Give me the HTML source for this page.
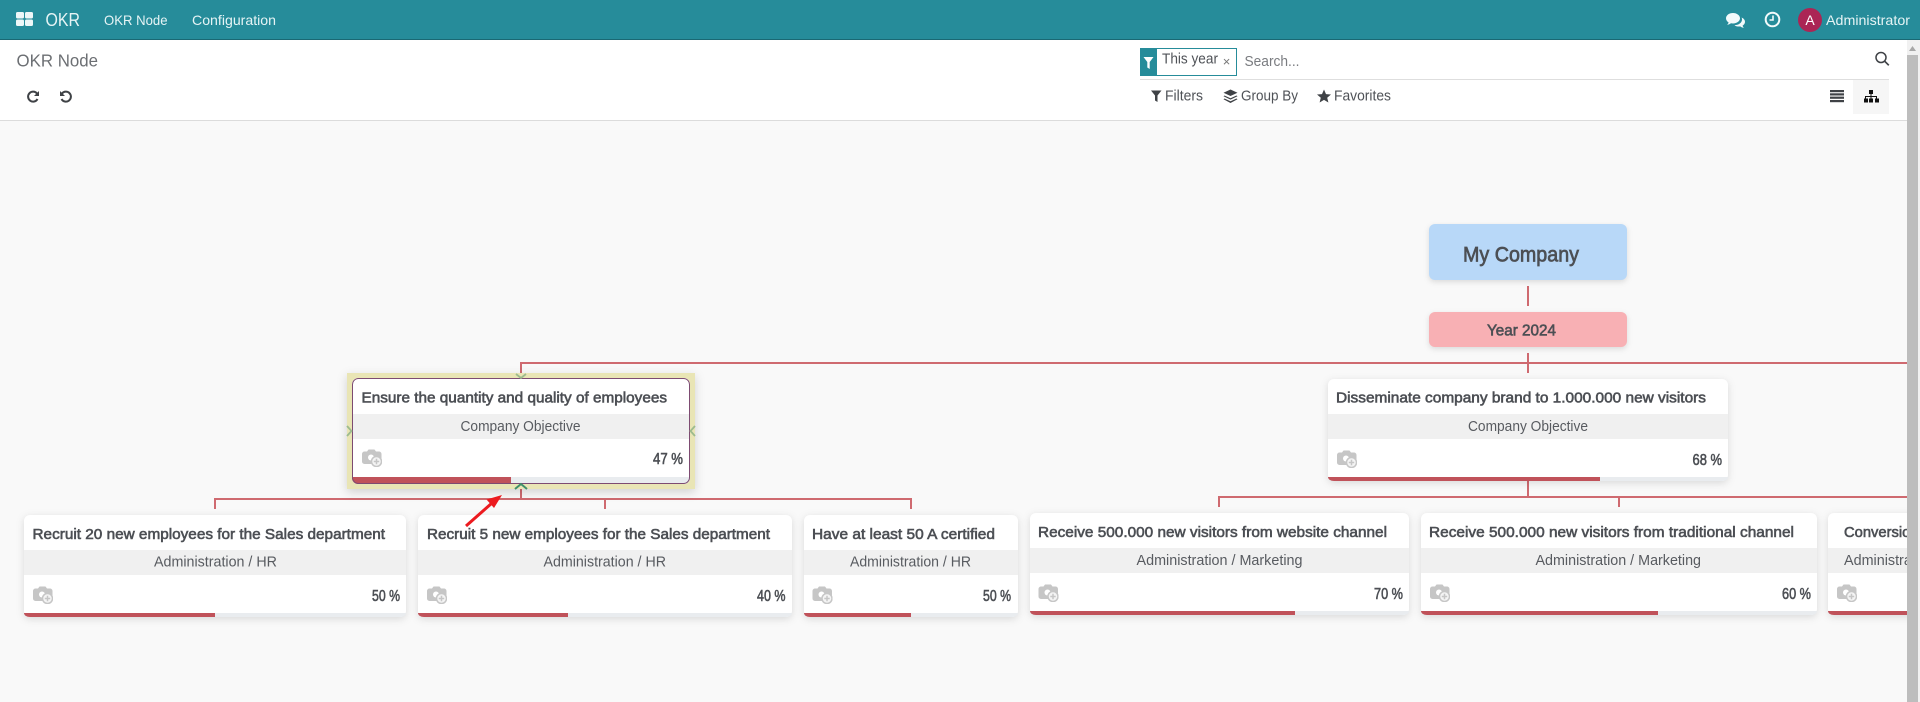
<!DOCTYPE html>
<html lang="en">
<head>
<meta charset="utf-8">
<title>OKR Node</title>
<style>
html,body{margin:0;padding:0;width:1920px;height:702px;overflow:hidden;background:#f9f9f9}
svg{display:block}
text{font-family:"Liberation Sans",Arial,sans-serif}
.t{font-size:15px;fill:#4c4f54;stroke:#4c4f54;stroke-width:.6px}
.s{font-size:14.500px;fill:#585b60}
.p{font-size:15.500px;fill:#4c4f54;stroke:#4c4f54;stroke-width:.6px}
.n{font-size:14px;fill:#e6f4f5}
.b{font-size:14.500px;fill:#4f5257}
.c{fill:#fff;filter:drop-shadow(0 2px 4px rgba(0,0,0,.13))}
</style>
</head>
<body>
<svg xmlns="http://www.w3.org/2000/svg" width="1920" height="702" viewBox="0 0 1920 702">
<defs>
<symbol id="cam" viewBox="0 0 20 18" width="20" height="18">
<path fill="#c6c6c6" d="M2.500 2.500H5L6.500 .5h6L14 2.500h3a2.500 2.500 0 0 1 2.500 2.500v7.500a2.500 2.500 0 0 1-2.500 2.500H2.500a2.500 2.500 0 0 1-2.500-2.500V5a2.500 2.500 0 0 1 2.500-2.500z"/>
<circle cx="9" cy="8.500" r="3" fill="#fff"/>
<circle cx="14.500" cy="12.500" r="5" fill="#f4f4f4" stroke="#c6c6c6" stroke-width="1.500"/>
<path d="M14.500 9.800v5.400M11.800 12.500h5.400" stroke="#c6c6c6" stroke-width="1.500"/>
</symbol>
<clipPath id="cr"><rect x="1828" y="500" width="79" height="130"/></clipPath>
</defs>

<rect width="1920" height="702" fill="#f9f9f9"/>

<!-- navbar -->
<rect width="1920" height="39" fill="#268c9a"/>
<rect y="39" width="1920" height="1" fill="#1a6873"/>
<g fill="#eef7f8">
<rect x="16" y="12" width="8" height="6.500" rx="1.500"/><rect x="25" y="12" width="8" height="6.500" rx="1.500"/>
<rect x="16" y="19.500" width="8" height="6.500" rx="1.500"/><rect x="25" y="19.500" width="8" height="6.500" rx="1.500"/>
</g>
<text x="45.500" y="26" font-size="18" fill="#e6f4f5" textLength="34.500" lengthAdjust="spacingAndGlyphs">OKR</text>
<text class="n" x="104" y="25" textLength="63.500" lengthAdjust="spacingAndGlyphs">OKR Node</text>
<text class="n" x="192" y="25" textLength="84" lengthAdjust="spacingAndGlyphs">Configuration</text>
<!-- chat -->
<path fill="#f2fafb" d="M1733 13c-4 0-7 2.400-7 5.300 0 1.700 1 3.200 2.600 4.200-.3 1-.9 1.800-1.500 2.400 1.500-.2 2.900-.8 3.900-1.600.6.100 1.300.2 2 .2 4 0 7-2.400 7-5.200s-3-5.300-7-5.300z"/>
<path fill="#f2fafb" d="M1741.500 17.500c.4.700.5 1.400.5 2 0 3.300-3.300 5.600-7.500 5.700 1.100.9 2.600 1.300 4.200 1.300.5 0 1 0 1.500-.1.900.7 2.300 1.300 3.800 1.500-.6-.6-1.200-1.300-1.400-2.300 1.400-.8 2.400-2.200 2.400-3.700 0-1.900-1.300-3.500-3.500-4.400z"/>
<!-- clock -->
<circle cx="1772.500" cy="19.500" r="6.800" fill="none" stroke="#f2fafb" stroke-width="2"/>
<path d="M1773 15.500v4.500h-3.500" fill="none" stroke="#f2fafb" stroke-width="1.600"/>
<!-- avatar -->
<circle cx="1810" cy="20" r="12" fill="#ab2555"/>
<text x="1810" y="25" font-size="14" fill="#fff" text-anchor="middle">A</text>
<text class="n" x="1826" y="25" textLength="84" lengthAdjust="spacingAndGlyphs">Administrator</text>

<!-- control panel -->
<rect y="40" width="1907" height="80" fill="#fff"/>
<rect y="120" width="1907" height="1" fill="#dcdcdc"/>
<text x="16.500" y="66.500" font-size="17.500" fill="#6c6f73" textLength="81.500" lengthAdjust="spacingAndGlyphs">OKR Node</text>
<g fill="none" stroke="#3f4246" stroke-width="2">
<path d="M37 93.500A5 5 0 1 0 37.500 99"/>
<path d="M62 93.500A5 5 0 1 1 61.500 99"/>
</g>
<path d="M39 91v5h-5z" fill="#3f4246"/>
<path d="M60 91v5h5z" fill="#3f4246"/>

<!-- search -->
<rect x="1140.500" y="48.500" width="96" height="27" fill="#fff" stroke="#268c9a"/>
<rect x="1140" y="48" width="17" height="28" fill="#268c9a"/>
<path d="M1143.500 57h10l-3.800 5v7l-2.400-1.500V62z" fill="#fff"/>
<text class="b" x="1162" y="63.500" textLength="56" lengthAdjust="spacingAndGlyphs">This year</text>
<text x="1226.500" y="66" font-size="13" fill="#777" text-anchor="middle">×</text>
<text x="1244.500" y="66" font-size="14.500" fill="#7a7c80" textLength="55" lengthAdjust="spacingAndGlyphs">Search...</text>
<circle cx="1881" cy="57.500" r="5" fill="none" stroke="#3f4246" stroke-width="1.500"/>
<path d="M1884.800 61.300l4 4" stroke="#3f4246" stroke-width="1.700"/>
<rect x="1140" y="79" width="749" height="1" fill="#dedede"/>

<path d="M1151 90.500h10.500l-4 5v6.500l-2.500-1.500v-5z" fill="#3f4246"/>
<text class="b" x="1165" y="100.500" textLength="38" lengthAdjust="spacingAndGlyphs">Filters</text>
<g fill="#3f4246">
<path d="M1230.500 89.500l7 3.200-7 3.300-7-3.300z"/>
<path d="M1224.500 95.500l6 2.800 6-2.800 1 .8-7 3.300-7-3.300z"/>
<path d="M1224.500 98.500l6 2.800 6-2.800 1 .8-7 3.700-7-3.700z"/>
</g>
<text class="b" x="1241" y="100.500" textLength="57" lengthAdjust="spacingAndGlyphs">Group By</text>
<path d="M1324 89.500l2 4.600 5 .4-3.800 3.200 1.200 4.800-4.400-2.600-4.400 2.600 1.200-4.800-3.800-3.200 5-.4z" fill="#3f4246"/>
<text class="b" x="1334" y="100.500" textLength="57" lengthAdjust="spacingAndGlyphs">Favorites</text>

<g fill="#3f4246">
<rect x="1830" y="90" width="14" height="2.200"/><rect x="1830" y="93.300" width="14" height="2.200"/>
<rect x="1830" y="96.600" width="14" height="2.200"/><rect x="1830" y="100" width="14" height="2.200"/>
</g>
<rect x="1853" y="80" width="36" height="34" fill="#f6f6f6"/>
<g fill="#111">
<rect x="1869" y="90" width="4" height="4"/>
<rect x="1864" y="98.500" width="4" height="4"/><rect x="1869" y="98.500" width="4" height="4"/><rect x="1875" y="98.500" width="4" height="4"/>
<path d="M1870.500 94h1v2h5.500v2.500h-1V97h-4.500v1.500h-1V97H1866v1.500h-1V96h5.500z"/>
</g>

<!-- connectors -->
<g fill="#cf6a70">
<rect x="1527" y="286" width="2" height="20"/>
<rect x="1527" y="353" width="2" height="20"/>
<rect x="520" y="362" width="1387" height="2"/>
<rect x="520" y="362" width="2" height="12"/>
<rect x="520" y="484" width="2" height="15"/>
<rect x="214" y="498" width="698" height="2"/>
<rect x="214" y="498" width="2" height="11"/>
<rect x="604" y="498" width="2" height="11"/>
<rect x="910" y="498" width="2" height="11"/>
<rect x="1527" y="481" width="2" height="16"/>
<rect x="1218" y="496" width="689" height="2"/>
<rect x="1218" y="496" width="2" height="11"/>
<rect x="1618" y="496" width="2" height="11"/>
</g>

<!-- top nodes -->
<rect x="1429" y="224" width="198" height="56" rx="6" fill="#b8d8f8" style="filter:drop-shadow(0 2px 3px rgba(0,0,0,.12))"/>
<text x="1463" y="261.500" font-size="21.500" fill="#4c4f54" stroke="#4c4f54" stroke-width=".7" textLength="116" lengthAdjust="spacingAndGlyphs">My Company</text>
<rect x="1429" y="312" width="198" height="35" rx="6" fill="#f8b0b4" style="filter:drop-shadow(0 2px 3px rgba(0,0,0,.12))"/>
<text x="1487" y="335.500" font-size="15.500" fill="#4c4f54" stroke="#4c4f54" stroke-width=".6" textLength="69" lengthAdjust="spacingAndGlyphs">Year 2024</text>

<!-- selected objective -->
<rect x="347" y="373" width="348" height="116" fill="#e9e5b5" style="filter:drop-shadow(0 3px 5px rgba(0,0,0,.16))"/>
<rect x="352" y="378" width="338" height="106" rx="6" fill="#fff"/>
<rect x="353" y="414" width="336" height="25" fill="#f0f0f0"/>
<path d="M352 477h338v1a6 6 0 0 1-6 6H358a6 6 0 0 1-6-6z" fill="#e9ecef"/>
<path d="M352 477h159v7H358a6 6 0 0 1-6-6z" fill="#c0525a"/>
<rect x="352.500" y="378.500" width="337" height="105" rx="6" fill="none" stroke="#7d4b72"/>
<text class="t" x="361.500" y="402.500" textLength="305.500" lengthAdjust="spacingAndGlyphs">Ensure the quantity and quality of employees</text>
<text class="s" x="460.500" y="431" textLength="120" lengthAdjust="spacingAndGlyphs">Company Objective</text>
<use href="#cam" x="362" y="449"/>
<text class="p" x="653" y="464" textLength="30" lengthAdjust="spacingAndGlyphs">47 %</text>
<g fill="none" stroke-width="1.800">
<path d="M516 374l5 4 5-4" stroke="#9dbb8d"/>
<path d="M347 426l4.500 5-4.500 5" stroke="#9dbb8d"/>
<path d="M695 426l-4.500 5 4.500 5" stroke="#9dbb8d"/>
<path d="M515 489l6-5 6 5" stroke="#3f8f6a" stroke-width="2"/>
</g>

<!-- objective 2 -->
<rect class="c" x="1328" y="379" width="400" height="102" rx="6"/>
<rect x="1328" y="414" width="400" height="25" fill="#f0f0f0"/>
<path d="M1328 477h400a6 4 0 0 1-6 4H1334a6 4 0 0 1-6-4z" fill="#e9ecef"/>
<path d="M1328 477h272v4H1334a6 4 0 0 1-6-4z" fill="#c0525a"/>
<text class="t" x="1336" y="402.500" textLength="370" lengthAdjust="spacingAndGlyphs">Disseminate company brand to 1.000.000 new visitors</text>
<text class="s" x="1468" y="431" textLength="120" lengthAdjust="spacingAndGlyphs">Company Objective</text>
<use href="#cam" x="1337" y="450"/>
<text class="p" x="1692.500" y="465" textLength="29.500" lengthAdjust="spacingAndGlyphs">68 %</text>

<!-- row left -->
<rect class="c" x="24" y="515" width="382" height="102" rx="6"/>
<rect x="24" y="550" width="382" height="25" fill="#f0f0f0"/>
<path d="M24 613h382a6 4 0 0 1-6 4H30a6 4 0 0 1-6-4z" fill="#e9ecef"/>
<path d="M24 613h191v4H30a6 4 0 0 1-6-4z" fill="#c0525a"/>
<text class="t" x="32.500" y="539" textLength="352.500" lengthAdjust="spacingAndGlyphs">Recruit 20 new employees for the Sales department</text>
<text class="s" x="154" y="566.500" textLength="123" lengthAdjust="spacingAndGlyphs">Administration / HR</text>
<use href="#cam" x="33" y="586"/>
<text class="p" x="372" y="601" textLength="28" lengthAdjust="spacingAndGlyphs">50 %</text>

<rect class="c" x="418" y="515" width="374" height="102" rx="6"/>
<rect x="418" y="550" width="374" height="25" fill="#f0f0f0"/>
<path d="M418 613h374a6 4 0 0 1-6 4H424a6 4 0 0 1-6-4z" fill="#e9ecef"/>
<path d="M418 613h150v4H424a6 4 0 0 1-6-4z" fill="#c0525a"/>
<text class="t" x="427" y="539" textLength="343" lengthAdjust="spacingAndGlyphs">Recruit 5 new employees for the Sales department</text>
<text class="s" x="543.500" y="566.500" textLength="122.500" lengthAdjust="spacingAndGlyphs">Administration / HR</text>
<use href="#cam" x="427" y="586"/>
<text class="p" x="757" y="601" textLength="28.500" lengthAdjust="spacingAndGlyphs">40 %</text>

<rect class="c" x="804" y="515" width="214" height="102" rx="6"/>
<rect x="804" y="550" width="214" height="25" fill="#f0f0f0"/>
<path d="M804 613h214a6 4 0 0 1-6 4H810a6 4 0 0 1-6-4z" fill="#e9ecef"/>
<path d="M804 613h107v4H810a6 4 0 0 1-6-4z" fill="#c0525a"/>
<text class="t" x="812" y="539" textLength="183" lengthAdjust="spacingAndGlyphs">Have at least 50 A certified</text>
<text class="s" x="850" y="566.500" textLength="121" lengthAdjust="spacingAndGlyphs">Administration / HR</text>
<use href="#cam" x="812.500" y="586"/>
<text class="p" x="983" y="601" textLength="28" lengthAdjust="spacingAndGlyphs">50 %</text>

<!-- row right -->
<rect class="c" x="1030" y="513" width="379" height="102" rx="6"/>
<rect x="1030" y="548" width="379" height="25" fill="#f0f0f0"/>
<path d="M1030 611h379a6 4 0 0 1-6 4H1036a6 4 0 0 1-6-4z" fill="#e9ecef"/>
<path d="M1030 611h265v4H1036a6 4 0 0 1-6-4z" fill="#c0525a"/>
<text class="t" x="1038" y="537" textLength="349" lengthAdjust="spacingAndGlyphs">Receive 500.000 new visitors from website channel</text>
<text class="s" x="1136.500" y="565" textLength="166" lengthAdjust="spacingAndGlyphs">Administration / Marketing</text>
<use href="#cam" x="1038.500" y="584"/>
<text class="p" x="1374" y="599" textLength="29" lengthAdjust="spacingAndGlyphs">70 %</text>

<rect class="c" x="1421" y="513" width="396" height="102" rx="6"/>
<rect x="1421" y="548" width="396" height="25" fill="#f0f0f0"/>
<path d="M1421 611h396a6 4 0 0 1-6 4H1427a6 4 0 0 1-6-4z" fill="#e9ecef"/>
<path d="M1421 611h237v4H1427a6 4 0 0 1-6-4z" fill="#c0525a"/>
<text class="t" x="1429" y="537" textLength="365" lengthAdjust="spacingAndGlyphs">Receive 500.000 new visitors from traditional channel</text>
<text class="s" x="1535.500" y="565" textLength="165.500" lengthAdjust="spacingAndGlyphs">Administration / Marketing</text>
<use href="#cam" x="1430" y="584"/>
<text class="p" x="1782" y="599" textLength="29" lengthAdjust="spacingAndGlyphs">60 %</text>

<rect class="c" x="1828" y="513" width="120" height="102" rx="6"/>
<g clip-path="url(#cr)">
<rect x="1828" y="548" width="120" height="25" fill="#f0f0f0"/>
<path d="M1828 611h120v4H1834a6 4 0 0 1-6-4z" fill="#c0525a"/>
<text class="t" x="1844" y="537" textLength="104" lengthAdjust="spacingAndGlyphs">Conversion rate</text>
<text class="s" x="1844" y="565" textLength="166" lengthAdjust="spacingAndGlyphs">Administration / Marketing</text>
</g>
<use href="#cam" x="1837" y="584"/>

<!-- red annotation arrow -->
<path d="M466 526L492 503" stroke="#ec1a1f" stroke-width="3" fill="none"/>
<path d="M502 495l-15.500 4.500 7.500 8.500z" fill="#ec1a1f"/>

<!-- scrollbar -->
<rect x="1907" y="40" width="13" height="662" fill="#f1f1f1"/>
<rect x="1907" y="55" width="11" height="647" fill="#bdbdbd"/>
<path d="M1912.500 46l-3.500 5h7z" fill="#a8a8a8"/>
</svg>
</body>
</html>
